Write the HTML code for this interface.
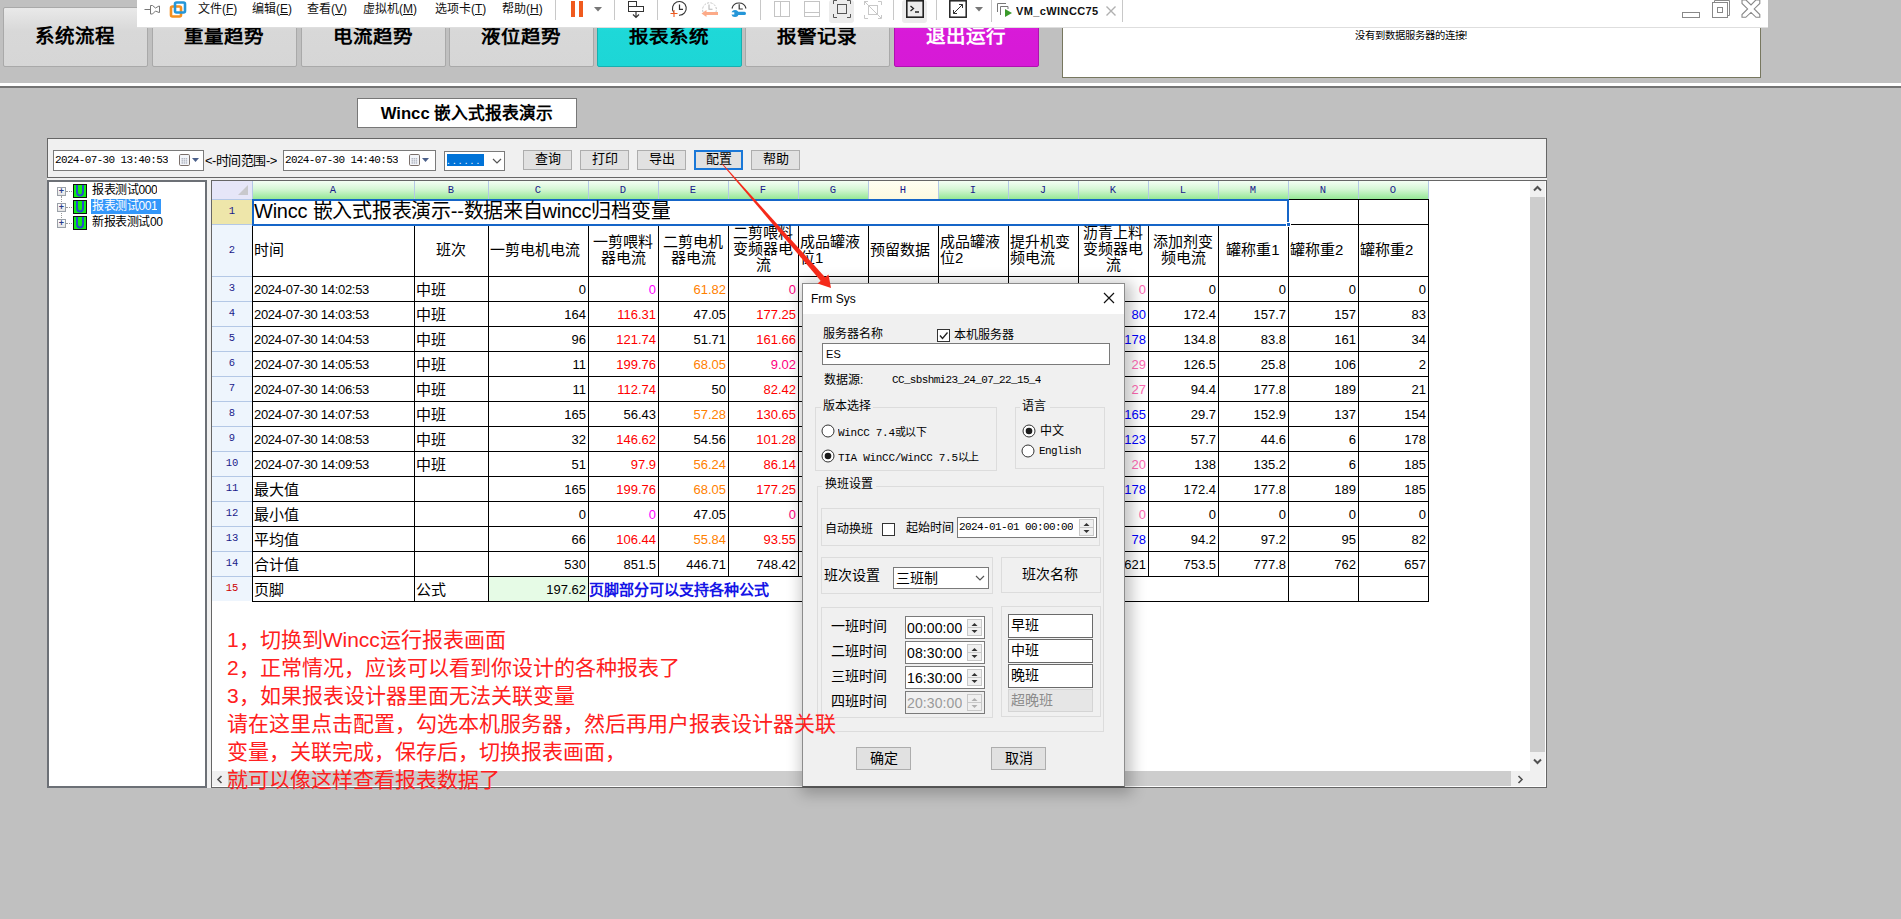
<!DOCTYPE html><html lang="zh-CN"><head><meta charset="utf-8"><style>
*{box-sizing:border-box;margin:0;padding:0}
html,body{width:1901px;height:919px;overflow:hidden;background:#c0c0c0;font-family:"Liberation Sans",sans-serif;color:#000}
.ab{position:absolute}
.navb{position:absolute;top:7px;height:60px;width:145px;padding-right:1px;border:1px solid #a9a9a9;border-radius:2px;background:linear-gradient(#e9e9e9,#d8d8d8 40%,#d6d6d6);font-size:19.5px;font-weight:bold;text-align:center;line-height:56px;letter-spacing:0px}
.c{position:absolute;white-space:nowrap;overflow:hidden}
.dt{font-size:13px}
.mono{font-family:"Liberation Mono",monospace}
.hd{font-size:15px;white-space:normal}
.hl{font-family:"Liberation Mono",monospace;font-weight:normal;font-size:10.5px;color:#1a1a8a}
</style></head><body>

<div class="navb" style="left:3px;">系统流程</div>
<div class="navb" style="left:152px;">重量趋势</div>
<div class="navb" style="left:301px;">电流趋势</div>
<div class="navb" style="left:449px;">液位趋势</div>
<div class="navb" style="left:597px;background:linear-gradient(#33eded,#1ed8d8 40%,#1dd6d6);border-color:#17b0b0;">报表系统</div>
<div class="navb" style="left:745px;">报警记录</div>
<div class="navb" style="left:894px;background:linear-gradient(#e030e0,#d81ad8 40%,#d61ad6);border-color:#b010b0;color:#fff;">退出运行</div>
<div class="ab" style="left:0;top:83px;width:1901px;height:3px;background:#fff"></div>
<div class="ab" style="left:0;top:86px;width:1901px;height:2px;background:#747474"></div>
<div class="ab" style="left:1062px;top:20px;width:699px;height:58px;background:#fff;border:1px solid #77775f"></div>
<div class="ab" style="left:1300px;top:30px;width:222px;text-align:center;font-size:10.3px;line-height:12px">没有到数据服务器的连接!</div>
<div class="ab" style="left:357px;top:98px;width:220px;height:30px;background:#fff;border:1px solid #777;font-size:16.7px;font-weight:bold;text-align:center;line-height:30px">Wincc 嵌入式报表演示</div>
<div class="ab" style="left:47px;top:138px;width:1500px;height:43px;background:#f0f0f0"></div>
<div class="ab" style="left:47px;top:138px;width:1500px;height:40px;background:#f0f0f0;border:1px solid #666"></div>
<div class="ab" style="left:47px;top:180px;width:160px;height:608px;background:#fff;border:2px solid #6c7076"></div>
<div class="ab" style="left:207px;top:180px;width:4px;height:608px;background:#f0f0f0"></div>
<div class="ab" style="left:211px;top:180px;width:1336px;height:608px;background:#fff;border:1px solid #666"></div>
<div class="ab" style="left:53px;top:150px;width:151px;height:21px;background:#fff;border:1px solid #7a7a7a"></div>
<div class="c mono" style="left:55px;top:151px;height:19px;line-height:19px;font-size:11px;letter-spacing:-0.65px">2024-07-30 13:40:53</div>
<svg class="ab" style="left:179px;top:154px" width="22" height="14"><rect x="0.5" y="0.5" width="10" height="11" rx="1.2" fill="#f4f6fa" stroke="#7a6f6a"/><g fill="#b4b8c4"><rect x="2.5" y="4" width="1.5" height="1.5"/><rect x="4.6" y="4" width="1.5" height="1.5"/><rect x="6.7" y="4" width="1.5" height="1.5"/><rect x="2.5" y="6.1" width="1.5" height="1.5"/><rect x="4.6" y="6.1" width="1.5" height="1.5"/><rect x="6.7" y="6.1" width="1.5" height="1.5"/><rect x="2.5" y="8.2" width="1.5" height="1.5"/><rect x="4.6" y="8.2" width="1.5" height="1.5"/><rect x="6.7" y="8.2" width="1.5" height="1.5"/></g><polygon points="13,4 20,4 16.5,8" fill="#4a5f8a"/></svg>
<div class="c" style="left:205px;top:152px;height:18px;line-height:18px;font-size:13px;letter-spacing:-0.5px">&lt;-时间范围-&gt;</div>
<div class="ab" style="left:283px;top:150px;width:153px;height:21px;background:#fff;border:1px solid #7a7a7a"></div>
<div class="c mono" style="left:285px;top:151px;height:19px;line-height:19px;font-size:11px;letter-spacing:-0.65px">2024-07-30 14:40:53</div>
<svg class="ab" style="left:409px;top:154px" width="22" height="14"><rect x="0.5" y="0.5" width="10" height="11" rx="1.2" fill="#f4f6fa" stroke="#7a6f6a"/><g fill="#b4b8c4"><rect x="2.5" y="4" width="1.5" height="1.5"/><rect x="4.6" y="4" width="1.5" height="1.5"/><rect x="6.7" y="4" width="1.5" height="1.5"/><rect x="2.5" y="6.1" width="1.5" height="1.5"/><rect x="4.6" y="6.1" width="1.5" height="1.5"/><rect x="6.7" y="6.1" width="1.5" height="1.5"/><rect x="2.5" y="8.2" width="1.5" height="1.5"/><rect x="4.6" y="8.2" width="1.5" height="1.5"/><rect x="6.7" y="8.2" width="1.5" height="1.5"/></g><polygon points="13,4 20,4 16.5,8" fill="#4a5f8a"/></svg>
<div class="ab" style="left:444px;top:151px;width:61px;height:20px;background:#fff;border:1px solid #7a7a7a"></div>
<div class="ab" style="left:447px;top:154px;width:37px;height:12px;background:#0073d8;color:#fff;font-size:10px;line-height:13px;letter-spacing:3.1px;padding-left:0px">......</div>
<svg class="ab" style="left:492px;top:158px" width="10" height="7"><polyline points="1,1 5,5 9,1" fill="none" stroke="#555" stroke-width="1.2"/></svg>
<div class="ab" style="left:523px;top:150px;width:49px;height:20px;background:#e1e1e1;border:1px solid #adadad;font-size:13px;line-height:16px;text-align:center">查询</div>
<div class="ab" style="left:580px;top:150px;width:49px;height:20px;background:#e1e1e1;border:1px solid #adadad;font-size:13px;line-height:16px;text-align:center">打印</div>
<div class="ab" style="left:637px;top:150px;width:49px;height:20px;background:#e1e1e1;border:1px solid #adadad;font-size:13px;line-height:16px;text-align:center">导出</div>
<div class="ab" style="left:694px;top:150px;width:49px;height:20px;background:#e1e1e1;border:2px solid #1a78d8;font-size:13px;line-height:14px;text-align:center">配置</div>
<div class="ab" style="left:751px;top:150px;width:49px;height:20px;background:#e1e1e1;border:1px solid #adadad;font-size:13px;line-height:16px;text-align:center">帮助</div>
<div class="ab" style="left:61px;top:196px;width:1px;height:24px;border-left:1px dotted #999"></div>
<div class="ab" style="left:57px;top:187px;width:9px;height:9px;border:1px solid #9aa0a8;background:linear-gradient(#fff,#e4e4e4);font-size:9px;line-height:7px;text-align:center;color:#2a3c8c;font-weight:bold">+</div>
<div class="ab" style="left:66px;top:191px;width:6px;height:1px;border-top:1px dotted #999"></div>
<div class="ab" style="left:73px;top:184px;width:14px;height:14px;background:#11ee11;border:1px solid #111"></div>
<svg class="ab" style="left:75px;top:185px" width="10" height="12"><path d="M2,0 V7 Q2,10.5 5,10.5 Q8,10.5 8,7 V0" fill="none" stroke="#2a4ad0" stroke-width="2"/></svg>
<div class="c" style="left:92px;top:182px;height:16px;line-height:16px;font-size:12px;letter-spacing:-0.4px;color:#000">报表测试000</div>
<div class="ab" style="left:57px;top:203px;width:9px;height:9px;border:1px solid #9aa0a8;background:linear-gradient(#fff,#e4e4e4);font-size:9px;line-height:7px;text-align:center;color:#2a3c8c;font-weight:bold">+</div>
<div class="ab" style="left:66px;top:207px;width:6px;height:1px;border-top:1px dotted #999"></div>
<div class="ab" style="left:73px;top:200px;width:14px;height:14px;background:#11ee11;border:1px solid #111"></div>
<svg class="ab" style="left:75px;top:201px" width="10" height="12"><path d="M2,0 V7 Q2,10.5 5,10.5 Q8,10.5 8,7 V0" fill="none" stroke="#2a4ad0" stroke-width="2"/></svg>
<div class="ab" style="left:91px;top:199px;width:70px;height:15px;background:#3397fa"></div>
<div class="c" style="left:92px;top:198px;height:16px;line-height:16px;font-size:12px;letter-spacing:-0.4px;color:#fff">报表测试001</div>
<div class="ab" style="left:57px;top:219px;width:9px;height:9px;border:1px solid #9aa0a8;background:linear-gradient(#fff,#e4e4e4);font-size:9px;line-height:7px;text-align:center;color:#2a3c8c;font-weight:bold">+</div>
<div class="ab" style="left:66px;top:223px;width:6px;height:1px;border-top:1px dotted #999"></div>
<div class="ab" style="left:73px;top:216px;width:14px;height:14px;background:#11ee11;border:1px solid #111"></div>
<svg class="ab" style="left:75px;top:217px" width="10" height="12"><path d="M2,0 V7 Q2,10.5 5,10.5 Q8,10.5 8,7 V0" fill="none" stroke="#2a4ad0" stroke-width="2"/></svg>
<div class="c" style="left:92px;top:214px;height:16px;line-height:16px;font-size:12px;letter-spacing:-0.4px;color:#000">新报表测试00</div>
<div class="ab" style="left:252px;top:181px;width:162px;height:18px;background:linear-gradient(#f4fff4,#d6f7d6 45%,#95e895);border-left:1px solid #b4c8e6"></div>
<div class="ab hl" style="left:252px;top:181px;width:162px;height:18px;line-height:18px;text-align:center">A</div>
<div class="ab" style="left:414px;top:181px;width:74px;height:18px;background:linear-gradient(#f4fff4,#d6f7d6 45%,#95e895);border-left:1px solid #b4c8e6"></div>
<div class="ab hl" style="left:414px;top:181px;width:74px;height:18px;line-height:18px;text-align:center">B</div>
<div class="ab" style="left:488px;top:181px;width:100px;height:18px;background:linear-gradient(#f4fff4,#d6f7d6 45%,#95e895);border-left:1px solid #b4c8e6"></div>
<div class="ab hl" style="left:488px;top:181px;width:100px;height:18px;line-height:18px;text-align:center">C</div>
<div class="ab" style="left:588px;top:181px;width:70px;height:18px;background:linear-gradient(#f4fff4,#d6f7d6 45%,#95e895);border-left:1px solid #b4c8e6"></div>
<div class="ab hl" style="left:588px;top:181px;width:70px;height:18px;line-height:18px;text-align:center">D</div>
<div class="ab" style="left:658px;top:181px;width:70px;height:18px;background:linear-gradient(#f4fff4,#d6f7d6 45%,#95e895);border-left:1px solid #b4c8e6"></div>
<div class="ab hl" style="left:658px;top:181px;width:70px;height:18px;line-height:18px;text-align:center">E</div>
<div class="ab" style="left:728px;top:181px;width:70px;height:18px;background:linear-gradient(#f4fff4,#d6f7d6 45%,#95e895);border-left:1px solid #b4c8e6"></div>
<div class="ab hl" style="left:728px;top:181px;width:70px;height:18px;line-height:18px;text-align:center">F</div>
<div class="ab" style="left:798px;top:181px;width:70px;height:18px;background:linear-gradient(#f4fff4,#d6f7d6 45%,#95e895);border-left:1px solid #b4c8e6"></div>
<div class="ab hl" style="left:798px;top:181px;width:70px;height:18px;line-height:18px;text-align:center">G</div>
<div class="ab" style="left:868px;top:181px;width:70px;height:18px;background:linear-gradient(#fffff2,#fcf9e0);border-left:1px solid #b4c8e6"></div>
<div class="ab hl" style="left:868px;top:181px;width:70px;height:18px;line-height:18px;text-align:center">H</div>
<div class="ab" style="left:938px;top:181px;width:70px;height:18px;background:linear-gradient(#f4fff4,#d6f7d6 45%,#95e895);border-left:1px solid #b4c8e6"></div>
<div class="ab hl" style="left:938px;top:181px;width:70px;height:18px;line-height:18px;text-align:center">I</div>
<div class="ab" style="left:1008px;top:181px;width:70px;height:18px;background:linear-gradient(#f4fff4,#d6f7d6 45%,#95e895);border-left:1px solid #b4c8e6"></div>
<div class="ab hl" style="left:1008px;top:181px;width:70px;height:18px;line-height:18px;text-align:center">J</div>
<div class="ab" style="left:1078px;top:181px;width:70px;height:18px;background:linear-gradient(#f4fff4,#d6f7d6 45%,#95e895);border-left:1px solid #b4c8e6"></div>
<div class="ab hl" style="left:1078px;top:181px;width:70px;height:18px;line-height:18px;text-align:center">K</div>
<div class="ab" style="left:1148px;top:181px;width:70px;height:18px;background:linear-gradient(#f4fff4,#d6f7d6 45%,#95e895);border-left:1px solid #b4c8e6"></div>
<div class="ab hl" style="left:1148px;top:181px;width:70px;height:18px;line-height:18px;text-align:center">L</div>
<div class="ab" style="left:1218px;top:181px;width:70px;height:18px;background:linear-gradient(#f4fff4,#d6f7d6 45%,#95e895);border-left:1px solid #b4c8e6"></div>
<div class="ab hl" style="left:1218px;top:181px;width:70px;height:18px;line-height:18px;text-align:center">M</div>
<div class="ab" style="left:1288px;top:181px;width:70px;height:18px;background:linear-gradient(#f4fff4,#d6f7d6 45%,#95e895);border-left:1px solid #b4c8e6"></div>
<div class="ab hl" style="left:1288px;top:181px;width:70px;height:18px;line-height:18px;text-align:center">N</div>
<div class="ab" style="left:1358px;top:181px;width:70px;height:18px;background:linear-gradient(#f4fff4,#d6f7d6 45%,#95e895);border-left:1px solid #b4c8e6"></div>
<div class="ab hl" style="left:1358px;top:181px;width:70px;height:18px;line-height:18px;text-align:center">O</div>
<div class="ab" style="left:212px;top:181px;width:40px;height:18px;background:#e6e6f8"></div>
<div class="ab" style="left:1428px;top:181px;width:1px;height:18px;background:#b4c8e6"></div>
<svg class="ab" style="left:238px;top:185px" width="11" height="11"><polygon points="10,0 10,10 0,10" fill="#c8c8cc"/></svg>
<div class="ab" style="left:212px;top:199px;width:40px;height:25px;background:#eee6aa;border-top:1px solid #b4c8e6"></div>
<div class="ab hl" style="left:212px;top:199px;width:40px;height:25px;line-height:25px;text-align:center;color:#1a1a8a;font-weight:normal">1</div>
<div class="ab" style="left:212px;top:224px;width:40px;height:52px;background:#eef5fd;border-top:1px solid #b4c8e6"></div>
<div class="ab hl" style="left:212px;top:224px;width:40px;height:52px;line-height:52px;text-align:center;color:#1a1a8a;font-weight:normal">2</div>
<div class="ab" style="left:212px;top:276px;width:40px;height:25px;background:#eef5fd;border-top:1px solid #b4c8e6"></div>
<div class="ab hl" style="left:212px;top:276px;width:40px;height:25px;line-height:25px;text-align:center;color:#1a1a8a;font-weight:normal">3</div>
<div class="ab" style="left:212px;top:301px;width:40px;height:25px;background:#eef5fd;border-top:1px solid #b4c8e6"></div>
<div class="ab hl" style="left:212px;top:301px;width:40px;height:25px;line-height:25px;text-align:center;color:#1a1a8a;font-weight:normal">4</div>
<div class="ab" style="left:212px;top:326px;width:40px;height:25px;background:#eef5fd;border-top:1px solid #b4c8e6"></div>
<div class="ab hl" style="left:212px;top:326px;width:40px;height:25px;line-height:25px;text-align:center;color:#1a1a8a;font-weight:normal">5</div>
<div class="ab" style="left:212px;top:351px;width:40px;height:25px;background:#eef5fd;border-top:1px solid #b4c8e6"></div>
<div class="ab hl" style="left:212px;top:351px;width:40px;height:25px;line-height:25px;text-align:center;color:#1a1a8a;font-weight:normal">6</div>
<div class="ab" style="left:212px;top:376px;width:40px;height:25px;background:#eef5fd;border-top:1px solid #b4c8e6"></div>
<div class="ab hl" style="left:212px;top:376px;width:40px;height:25px;line-height:25px;text-align:center;color:#1a1a8a;font-weight:normal">7</div>
<div class="ab" style="left:212px;top:401px;width:40px;height:25px;background:#eef5fd;border-top:1px solid #b4c8e6"></div>
<div class="ab hl" style="left:212px;top:401px;width:40px;height:25px;line-height:25px;text-align:center;color:#1a1a8a;font-weight:normal">8</div>
<div class="ab" style="left:212px;top:426px;width:40px;height:25px;background:#eef5fd;border-top:1px solid #b4c8e6"></div>
<div class="ab hl" style="left:212px;top:426px;width:40px;height:25px;line-height:25px;text-align:center;color:#1a1a8a;font-weight:normal">9</div>
<div class="ab" style="left:212px;top:451px;width:40px;height:25px;background:#eef5fd;border-top:1px solid #b4c8e6"></div>
<div class="ab hl" style="left:212px;top:451px;width:40px;height:25px;line-height:25px;text-align:center;color:#1a1a8a;font-weight:normal">10</div>
<div class="ab" style="left:212px;top:476px;width:40px;height:25px;background:#eef5fd;border-top:1px solid #b4c8e6"></div>
<div class="ab hl" style="left:212px;top:476px;width:40px;height:25px;line-height:25px;text-align:center;color:#1a1a8a;font-weight:normal">11</div>
<div class="ab" style="left:212px;top:501px;width:40px;height:25px;background:#eef5fd;border-top:1px solid #b4c8e6"></div>
<div class="ab hl" style="left:212px;top:501px;width:40px;height:25px;line-height:25px;text-align:center;color:#1a1a8a;font-weight:normal">12</div>
<div class="ab" style="left:212px;top:526px;width:40px;height:25px;background:#eef5fd;border-top:1px solid #b4c8e6"></div>
<div class="ab hl" style="left:212px;top:526px;width:40px;height:25px;line-height:25px;text-align:center;color:#1a1a8a;font-weight:normal">13</div>
<div class="ab" style="left:212px;top:551px;width:40px;height:25px;background:#eef5fd;border-top:1px solid #b4c8e6"></div>
<div class="ab hl" style="left:212px;top:551px;width:40px;height:25px;line-height:25px;text-align:center;color:#1a1a8a;font-weight:normal">14</div>
<div class="ab" style="left:212px;top:576px;width:40px;height:25px;background:#eef5fd;border-top:1px solid #b4c8e6"></div>
<div class="ab hl" style="left:212px;top:576px;width:40px;height:25px;line-height:25px;text-align:center;color:#cc0000;font-weight:normal">15</div>
<div class="ab" style="left:488px;top:576px;width:100px;height:25px;background:#e6fbe6"></div>
<div class="ab" style="left:252px;top:276px;width:1177px;height:1px;background:#000"></div>
<div class="ab" style="left:252px;top:301px;width:1177px;height:1px;background:#000"></div>
<div class="ab" style="left:252px;top:326px;width:1177px;height:1px;background:#000"></div>
<div class="ab" style="left:252px;top:351px;width:1177px;height:1px;background:#000"></div>
<div class="ab" style="left:252px;top:376px;width:1177px;height:1px;background:#000"></div>
<div class="ab" style="left:252px;top:401px;width:1177px;height:1px;background:#000"></div>
<div class="ab" style="left:252px;top:426px;width:1177px;height:1px;background:#000"></div>
<div class="ab" style="left:252px;top:451px;width:1177px;height:1px;background:#000"></div>
<div class="ab" style="left:252px;top:476px;width:1177px;height:1px;background:#000"></div>
<div class="ab" style="left:252px;top:501px;width:1177px;height:1px;background:#000"></div>
<div class="ab" style="left:252px;top:526px;width:1177px;height:1px;background:#000"></div>
<div class="ab" style="left:252px;top:551px;width:1177px;height:1px;background:#000"></div>
<div class="ab" style="left:252px;top:576px;width:1177px;height:1px;background:#000"></div>
<div class="ab" style="left:252px;top:601px;width:1177px;height:1px;background:#000"></div>
<div class="ab" style="left:1288px;top:199px;width:141px;height:1px;background:#000"></div>
<div class="ab" style="left:1288px;top:224px;width:141px;height:1px;background:#000"></div>
<div class="ab" style="left:252px;top:199px;width:1px;height:403px;background:#000"></div>
<div class="ab" style="left:414px;top:224px;width:1px;height:378px;background:#000"></div>
<div class="ab" style="left:488px;top:224px;width:1px;height:378px;background:#000"></div>
<div class="ab" style="left:588px;top:224px;width:1px;height:378px;background:#000"></div>
<div class="ab" style="left:658px;top:224px;width:1px;height:353px;background:#000"></div>
<div class="ab" style="left:728px;top:224px;width:1px;height:353px;background:#000"></div>
<div class="ab" style="left:798px;top:224px;width:1px;height:353px;background:#000"></div>
<div class="ab" style="left:868px;top:224px;width:1px;height:353px;background:#000"></div>
<div class="ab" style="left:938px;top:224px;width:1px;height:353px;background:#000"></div>
<div class="ab" style="left:1008px;top:224px;width:1px;height:353px;background:#000"></div>
<div class="ab" style="left:1078px;top:224px;width:1px;height:353px;background:#000"></div>
<div class="ab" style="left:1148px;top:224px;width:1px;height:353px;background:#000"></div>
<div class="ab" style="left:1218px;top:224px;width:1px;height:353px;background:#000"></div>
<div class="ab" style="left:1288px;top:199px;width:1px;height:26px;background:#000"></div>
<div class="ab" style="left:1288px;top:224px;width:1px;height:378px;background:#000"></div>
<div class="ab" style="left:1358px;top:199px;width:1px;height:26px;background:#000"></div>
<div class="ab" style="left:1358px;top:224px;width:1px;height:378px;background:#000"></div>
<div class="ab" style="left:1428px;top:199px;width:1px;height:26px;background:#000"></div>
<div class="ab" style="left:1428px;top:224px;width:1px;height:378px;background:#000"></div>
<div class="ab" style="left:252px;top:199px;width:1037px;height:27px;border:2px solid #1565c8"></div>
<div class="ab" style="left:1286px;top:222px;width:5px;height:5px;background:#1565c8;border:1px solid #fff"></div>
<div class="c" style="left:254px;top:199px;height:25px;line-height:25px;font-size:20px;letter-spacing:-0.25px">Wincc 嵌入式报表演示--数据来自wincc归档变量</div>
<div class="c hd" style="left:252px;top:242px;width:162px;line-height:16px;text-align:left;padding-left:2px;">时间</div>
<div class="c hd" style="left:414px;top:242px;width:74px;line-height:16px;text-align:center;">班次</div>
<div class="c hd" style="left:488px;top:242px;width:100px;line-height:16px;text-align:left;padding-left:2px;">一剪电机电流</div>
<div class="c hd" style="left:588px;top:234px;width:70px;line-height:16px;text-align:center;">一剪喂料<br>器电流</div>
<div class="c hd" style="left:658px;top:234px;width:70px;line-height:16px;text-align:center;">二剪电机<br>器电流</div>
<div class="c hd" style="left:728px;top:225px;width:70px;line-height:16px;text-align:center;">二剪喂料<br>变频器电<br>流</div>
<div class="c hd" style="left:798px;top:234px;width:70px;line-height:16px;text-align:left;padding-left:2px;">成品罐液<br>位1</div>
<div class="c hd" style="left:868px;top:242px;width:70px;line-height:16px;text-align:left;padding-left:2px;">预留数据</div>
<div class="c hd" style="left:938px;top:234px;width:70px;line-height:16px;text-align:left;padding-left:2px;">成品罐液<br>位2</div>
<div class="c hd" style="left:1008px;top:234px;width:70px;line-height:16px;text-align:left;padding-left:2px;">提升机变<br>频电流</div>
<div class="c hd" style="left:1078px;top:225px;width:70px;line-height:16px;text-align:center;">沥青上料<br>变频器电<br>流</div>
<div class="c hd" style="left:1148px;top:234px;width:70px;line-height:16px;text-align:center;">添加剂变<br>频电流</div>
<div class="c hd" style="left:1218px;top:242px;width:70px;line-height:16px;text-align:center;">罐称重1</div>
<div class="c hd" style="left:1288px;top:242px;width:70px;line-height:16px;text-align:left;padding-left:2px;">罐称重2</div>
<div class="c hd" style="left:1358px;top:242px;width:70px;line-height:16px;text-align:left;padding-left:2px;">罐称重2</div>
<div class="c dt" style="left:252px;top:277px;width:162px;height:25px;line-height:25px;text-align:left;padding-left:2px;color:#000;letter-spacing:-0.3px;">2024-07-30 14:02:53</div>
<div class="c dt" style="left:414px;top:277px;width:74px;height:25px;line-height:25px;text-align:left;padding-left:2px;color:#000;font-size:15px;">中班</div>
<div class="c dt" style="left:488px;top:277px;width:100px;height:25px;line-height:25px;text-align:right;padding-right:2px;color:#000;">0</div>
<div class="c dt" style="left:588px;top:277px;width:70px;height:25px;line-height:25px;text-align:right;padding-right:2px;color:#ff00ff;">0</div>
<div class="c dt" style="left:658px;top:277px;width:70px;height:25px;line-height:25px;text-align:right;padding-right:2px;color:#ff8000;">61.82</div>
<div class="c dt" style="left:728px;top:277px;width:70px;height:25px;line-height:25px;text-align:right;padding-right:2px;color:#ff0080;">0</div>
<div class="c dt" style="left:1078px;top:277px;width:70px;height:25px;line-height:25px;text-align:right;padding-right:2px;color:#ff69b4;">0</div>
<div class="c dt" style="left:1148px;top:277px;width:70px;height:25px;line-height:25px;text-align:right;padding-right:2px;color:#000;">0</div>
<div class="c dt" style="left:1218px;top:277px;width:70px;height:25px;line-height:25px;text-align:right;padding-right:2px;color:#000;">0</div>
<div class="c dt" style="left:1288px;top:277px;width:70px;height:25px;line-height:25px;text-align:right;padding-right:2px;color:#000;">0</div>
<div class="c dt" style="left:1358px;top:277px;width:70px;height:25px;line-height:25px;text-align:right;padding-right:2px;color:#000;">0</div>
<div class="c dt" style="left:252px;top:302px;width:162px;height:25px;line-height:25px;text-align:left;padding-left:2px;color:#000;letter-spacing:-0.3px;">2024-07-30 14:03:53</div>
<div class="c dt" style="left:414px;top:302px;width:74px;height:25px;line-height:25px;text-align:left;padding-left:2px;color:#000;font-size:15px;">中班</div>
<div class="c dt" style="left:488px;top:302px;width:100px;height:25px;line-height:25px;text-align:right;padding-right:2px;color:#000;">164</div>
<div class="c dt" style="left:588px;top:302px;width:70px;height:25px;line-height:25px;text-align:right;padding-right:2px;color:#ff0000;">116.31</div>
<div class="c dt" style="left:658px;top:302px;width:70px;height:25px;line-height:25px;text-align:right;padding-right:2px;color:#000;">47.05</div>
<div class="c dt" style="left:728px;top:302px;width:70px;height:25px;line-height:25px;text-align:right;padding-right:2px;color:#ff0000;">177.25</div>
<div class="c dt" style="left:1078px;top:302px;width:70px;height:25px;line-height:25px;text-align:right;padding-right:2px;color:#0000ff;">80</div>
<div class="c dt" style="left:1148px;top:302px;width:70px;height:25px;line-height:25px;text-align:right;padding-right:2px;color:#000;">172.4</div>
<div class="c dt" style="left:1218px;top:302px;width:70px;height:25px;line-height:25px;text-align:right;padding-right:2px;color:#000;">157.7</div>
<div class="c dt" style="left:1288px;top:302px;width:70px;height:25px;line-height:25px;text-align:right;padding-right:2px;color:#000;">157</div>
<div class="c dt" style="left:1358px;top:302px;width:70px;height:25px;line-height:25px;text-align:right;padding-right:2px;color:#000;">83</div>
<div class="c dt" style="left:252px;top:327px;width:162px;height:25px;line-height:25px;text-align:left;padding-left:2px;color:#000;letter-spacing:-0.3px;">2024-07-30 14:04:53</div>
<div class="c dt" style="left:414px;top:327px;width:74px;height:25px;line-height:25px;text-align:left;padding-left:2px;color:#000;font-size:15px;">中班</div>
<div class="c dt" style="left:488px;top:327px;width:100px;height:25px;line-height:25px;text-align:right;padding-right:2px;color:#000;">96</div>
<div class="c dt" style="left:588px;top:327px;width:70px;height:25px;line-height:25px;text-align:right;padding-right:2px;color:#ff0000;">121.74</div>
<div class="c dt" style="left:658px;top:327px;width:70px;height:25px;line-height:25px;text-align:right;padding-right:2px;color:#000;">51.71</div>
<div class="c dt" style="left:728px;top:327px;width:70px;height:25px;line-height:25px;text-align:right;padding-right:2px;color:#ff0000;">161.66</div>
<div class="c dt" style="left:1078px;top:327px;width:70px;height:25px;line-height:25px;text-align:right;padding-right:2px;color:#0000ff;">178</div>
<div class="c dt" style="left:1148px;top:327px;width:70px;height:25px;line-height:25px;text-align:right;padding-right:2px;color:#000;">134.8</div>
<div class="c dt" style="left:1218px;top:327px;width:70px;height:25px;line-height:25px;text-align:right;padding-right:2px;color:#000;">83.8</div>
<div class="c dt" style="left:1288px;top:327px;width:70px;height:25px;line-height:25px;text-align:right;padding-right:2px;color:#000;">161</div>
<div class="c dt" style="left:1358px;top:327px;width:70px;height:25px;line-height:25px;text-align:right;padding-right:2px;color:#000;">34</div>
<div class="c dt" style="left:252px;top:352px;width:162px;height:25px;line-height:25px;text-align:left;padding-left:2px;color:#000;letter-spacing:-0.3px;">2024-07-30 14:05:53</div>
<div class="c dt" style="left:414px;top:352px;width:74px;height:25px;line-height:25px;text-align:left;padding-left:2px;color:#000;font-size:15px;">中班</div>
<div class="c dt" style="left:488px;top:352px;width:100px;height:25px;line-height:25px;text-align:right;padding-right:2px;color:#000;">11</div>
<div class="c dt" style="left:588px;top:352px;width:70px;height:25px;line-height:25px;text-align:right;padding-right:2px;color:#ff0000;">199.76</div>
<div class="c dt" style="left:658px;top:352px;width:70px;height:25px;line-height:25px;text-align:right;padding-right:2px;color:#ff8000;">68.05</div>
<div class="c dt" style="left:728px;top:352px;width:70px;height:25px;line-height:25px;text-align:right;padding-right:2px;color:#ff0080;">9.02</div>
<div class="c dt" style="left:1078px;top:352px;width:70px;height:25px;line-height:25px;text-align:right;padding-right:2px;color:#ff69b4;">29</div>
<div class="c dt" style="left:1148px;top:352px;width:70px;height:25px;line-height:25px;text-align:right;padding-right:2px;color:#000;">126.5</div>
<div class="c dt" style="left:1218px;top:352px;width:70px;height:25px;line-height:25px;text-align:right;padding-right:2px;color:#000;">25.8</div>
<div class="c dt" style="left:1288px;top:352px;width:70px;height:25px;line-height:25px;text-align:right;padding-right:2px;color:#000;">106</div>
<div class="c dt" style="left:1358px;top:352px;width:70px;height:25px;line-height:25px;text-align:right;padding-right:2px;color:#000;">2</div>
<div class="c dt" style="left:252px;top:377px;width:162px;height:25px;line-height:25px;text-align:left;padding-left:2px;color:#000;letter-spacing:-0.3px;">2024-07-30 14:06:53</div>
<div class="c dt" style="left:414px;top:377px;width:74px;height:25px;line-height:25px;text-align:left;padding-left:2px;color:#000;font-size:15px;">中班</div>
<div class="c dt" style="left:488px;top:377px;width:100px;height:25px;line-height:25px;text-align:right;padding-right:2px;color:#000;">11</div>
<div class="c dt" style="left:588px;top:377px;width:70px;height:25px;line-height:25px;text-align:right;padding-right:2px;color:#ff0000;">112.74</div>
<div class="c dt" style="left:658px;top:377px;width:70px;height:25px;line-height:25px;text-align:right;padding-right:2px;color:#000;">50</div>
<div class="c dt" style="left:728px;top:377px;width:70px;height:25px;line-height:25px;text-align:right;padding-right:2px;color:#ff0000;">82.42</div>
<div class="c dt" style="left:1078px;top:377px;width:70px;height:25px;line-height:25px;text-align:right;padding-right:2px;color:#ff69b4;">27</div>
<div class="c dt" style="left:1148px;top:377px;width:70px;height:25px;line-height:25px;text-align:right;padding-right:2px;color:#000;">94.4</div>
<div class="c dt" style="left:1218px;top:377px;width:70px;height:25px;line-height:25px;text-align:right;padding-right:2px;color:#000;">177.8</div>
<div class="c dt" style="left:1288px;top:377px;width:70px;height:25px;line-height:25px;text-align:right;padding-right:2px;color:#000;">189</div>
<div class="c dt" style="left:1358px;top:377px;width:70px;height:25px;line-height:25px;text-align:right;padding-right:2px;color:#000;">21</div>
<div class="c dt" style="left:252px;top:402px;width:162px;height:25px;line-height:25px;text-align:left;padding-left:2px;color:#000;letter-spacing:-0.3px;">2024-07-30 14:07:53</div>
<div class="c dt" style="left:414px;top:402px;width:74px;height:25px;line-height:25px;text-align:left;padding-left:2px;color:#000;font-size:15px;">中班</div>
<div class="c dt" style="left:488px;top:402px;width:100px;height:25px;line-height:25px;text-align:right;padding-right:2px;color:#000;">165</div>
<div class="c dt" style="left:588px;top:402px;width:70px;height:25px;line-height:25px;text-align:right;padding-right:2px;color:#000;">56.43</div>
<div class="c dt" style="left:658px;top:402px;width:70px;height:25px;line-height:25px;text-align:right;padding-right:2px;color:#ff8000;">57.28</div>
<div class="c dt" style="left:728px;top:402px;width:70px;height:25px;line-height:25px;text-align:right;padding-right:2px;color:#ff0000;">130.65</div>
<div class="c dt" style="left:1078px;top:402px;width:70px;height:25px;line-height:25px;text-align:right;padding-right:2px;color:#0000ff;">165</div>
<div class="c dt" style="left:1148px;top:402px;width:70px;height:25px;line-height:25px;text-align:right;padding-right:2px;color:#000;">29.7</div>
<div class="c dt" style="left:1218px;top:402px;width:70px;height:25px;line-height:25px;text-align:right;padding-right:2px;color:#000;">152.9</div>
<div class="c dt" style="left:1288px;top:402px;width:70px;height:25px;line-height:25px;text-align:right;padding-right:2px;color:#000;">137</div>
<div class="c dt" style="left:1358px;top:402px;width:70px;height:25px;line-height:25px;text-align:right;padding-right:2px;color:#000;">154</div>
<div class="c dt" style="left:252px;top:427px;width:162px;height:25px;line-height:25px;text-align:left;padding-left:2px;color:#000;letter-spacing:-0.3px;">2024-07-30 14:08:53</div>
<div class="c dt" style="left:414px;top:427px;width:74px;height:25px;line-height:25px;text-align:left;padding-left:2px;color:#000;font-size:15px;">中班</div>
<div class="c dt" style="left:488px;top:427px;width:100px;height:25px;line-height:25px;text-align:right;padding-right:2px;color:#000;">32</div>
<div class="c dt" style="left:588px;top:427px;width:70px;height:25px;line-height:25px;text-align:right;padding-right:2px;color:#ff0000;">146.62</div>
<div class="c dt" style="left:658px;top:427px;width:70px;height:25px;line-height:25px;text-align:right;padding-right:2px;color:#000;">54.56</div>
<div class="c dt" style="left:728px;top:427px;width:70px;height:25px;line-height:25px;text-align:right;padding-right:2px;color:#ff0000;">101.28</div>
<div class="c dt" style="left:1078px;top:427px;width:70px;height:25px;line-height:25px;text-align:right;padding-right:2px;color:#0000ff;">123</div>
<div class="c dt" style="left:1148px;top:427px;width:70px;height:25px;line-height:25px;text-align:right;padding-right:2px;color:#000;">57.7</div>
<div class="c dt" style="left:1218px;top:427px;width:70px;height:25px;line-height:25px;text-align:right;padding-right:2px;color:#000;">44.6</div>
<div class="c dt" style="left:1288px;top:427px;width:70px;height:25px;line-height:25px;text-align:right;padding-right:2px;color:#000;">6</div>
<div class="c dt" style="left:1358px;top:427px;width:70px;height:25px;line-height:25px;text-align:right;padding-right:2px;color:#000;">178</div>
<div class="c dt" style="left:252px;top:452px;width:162px;height:25px;line-height:25px;text-align:left;padding-left:2px;color:#000;letter-spacing:-0.3px;">2024-07-30 14:09:53</div>
<div class="c dt" style="left:414px;top:452px;width:74px;height:25px;line-height:25px;text-align:left;padding-left:2px;color:#000;font-size:15px;">中班</div>
<div class="c dt" style="left:488px;top:452px;width:100px;height:25px;line-height:25px;text-align:right;padding-right:2px;color:#000;">51</div>
<div class="c dt" style="left:588px;top:452px;width:70px;height:25px;line-height:25px;text-align:right;padding-right:2px;color:#ff0000;">97.9</div>
<div class="c dt" style="left:658px;top:452px;width:70px;height:25px;line-height:25px;text-align:right;padding-right:2px;color:#ff8000;">56.24</div>
<div class="c dt" style="left:728px;top:452px;width:70px;height:25px;line-height:25px;text-align:right;padding-right:2px;color:#ff0000;">86.14</div>
<div class="c dt" style="left:1078px;top:452px;width:70px;height:25px;line-height:25px;text-align:right;padding-right:2px;color:#ff69b4;">20</div>
<div class="c dt" style="left:1148px;top:452px;width:70px;height:25px;line-height:25px;text-align:right;padding-right:2px;color:#000;">138</div>
<div class="c dt" style="left:1218px;top:452px;width:70px;height:25px;line-height:25px;text-align:right;padding-right:2px;color:#000;">135.2</div>
<div class="c dt" style="left:1288px;top:452px;width:70px;height:25px;line-height:25px;text-align:right;padding-right:2px;color:#000;">6</div>
<div class="c dt" style="left:1358px;top:452px;width:70px;height:25px;line-height:25px;text-align:right;padding-right:2px;color:#000;">185</div>
<div class="c dt" style="left:252px;top:477px;width:162px;height:25px;line-height:25px;text-align:left;padding-left:2px;color:#000;font-size:15px;">最大值</div>
<div class="c dt" style="left:488px;top:477px;width:100px;height:25px;line-height:25px;text-align:right;padding-right:2px;color:#000;">165</div>
<div class="c dt" style="left:588px;top:477px;width:70px;height:25px;line-height:25px;text-align:right;padding-right:2px;color:#ff0000;">199.76</div>
<div class="c dt" style="left:658px;top:477px;width:70px;height:25px;line-height:25px;text-align:right;padding-right:2px;color:#ff8000;">68.05</div>
<div class="c dt" style="left:728px;top:477px;width:70px;height:25px;line-height:25px;text-align:right;padding-right:2px;color:#ff0000;">177.25</div>
<div class="c dt" style="left:1078px;top:477px;width:70px;height:25px;line-height:25px;text-align:right;padding-right:2px;color:#0000ff;">178</div>
<div class="c dt" style="left:1148px;top:477px;width:70px;height:25px;line-height:25px;text-align:right;padding-right:2px;color:#000;">172.4</div>
<div class="c dt" style="left:1218px;top:477px;width:70px;height:25px;line-height:25px;text-align:right;padding-right:2px;color:#000;">177.8</div>
<div class="c dt" style="left:1288px;top:477px;width:70px;height:25px;line-height:25px;text-align:right;padding-right:2px;color:#000;">189</div>
<div class="c dt" style="left:1358px;top:477px;width:70px;height:25px;line-height:25px;text-align:right;padding-right:2px;color:#000;">185</div>
<div class="c dt" style="left:252px;top:502px;width:162px;height:25px;line-height:25px;text-align:left;padding-left:2px;color:#000;font-size:15px;">最小值</div>
<div class="c dt" style="left:488px;top:502px;width:100px;height:25px;line-height:25px;text-align:right;padding-right:2px;color:#000;">0</div>
<div class="c dt" style="left:588px;top:502px;width:70px;height:25px;line-height:25px;text-align:right;padding-right:2px;color:#ff00ff;">0</div>
<div class="c dt" style="left:658px;top:502px;width:70px;height:25px;line-height:25px;text-align:right;padding-right:2px;color:#000;">47.05</div>
<div class="c dt" style="left:728px;top:502px;width:70px;height:25px;line-height:25px;text-align:right;padding-right:2px;color:#ff0080;">0</div>
<div class="c dt" style="left:1078px;top:502px;width:70px;height:25px;line-height:25px;text-align:right;padding-right:2px;color:#ff69b4;">0</div>
<div class="c dt" style="left:1148px;top:502px;width:70px;height:25px;line-height:25px;text-align:right;padding-right:2px;color:#000;">0</div>
<div class="c dt" style="left:1218px;top:502px;width:70px;height:25px;line-height:25px;text-align:right;padding-right:2px;color:#000;">0</div>
<div class="c dt" style="left:1288px;top:502px;width:70px;height:25px;line-height:25px;text-align:right;padding-right:2px;color:#000;">0</div>
<div class="c dt" style="left:1358px;top:502px;width:70px;height:25px;line-height:25px;text-align:right;padding-right:2px;color:#000;">0</div>
<div class="c dt" style="left:252px;top:527px;width:162px;height:25px;line-height:25px;text-align:left;padding-left:2px;color:#000;font-size:15px;">平均值</div>
<div class="c dt" style="left:488px;top:527px;width:100px;height:25px;line-height:25px;text-align:right;padding-right:2px;color:#000;">66</div>
<div class="c dt" style="left:588px;top:527px;width:70px;height:25px;line-height:25px;text-align:right;padding-right:2px;color:#ff0000;">106.44</div>
<div class="c dt" style="left:658px;top:527px;width:70px;height:25px;line-height:25px;text-align:right;padding-right:2px;color:#ff8000;">55.84</div>
<div class="c dt" style="left:728px;top:527px;width:70px;height:25px;line-height:25px;text-align:right;padding-right:2px;color:#ff0000;">93.55</div>
<div class="c dt" style="left:1078px;top:527px;width:70px;height:25px;line-height:25px;text-align:right;padding-right:2px;color:#0000ff;">78</div>
<div class="c dt" style="left:1148px;top:527px;width:70px;height:25px;line-height:25px;text-align:right;padding-right:2px;color:#000;">94.2</div>
<div class="c dt" style="left:1218px;top:527px;width:70px;height:25px;line-height:25px;text-align:right;padding-right:2px;color:#000;">97.2</div>
<div class="c dt" style="left:1288px;top:527px;width:70px;height:25px;line-height:25px;text-align:right;padding-right:2px;color:#000;">95</div>
<div class="c dt" style="left:1358px;top:527px;width:70px;height:25px;line-height:25px;text-align:right;padding-right:2px;color:#000;">82</div>
<div class="c dt" style="left:252px;top:552px;width:162px;height:25px;line-height:25px;text-align:left;padding-left:2px;color:#000;font-size:15px;">合计值</div>
<div class="c dt" style="left:488px;top:552px;width:100px;height:25px;line-height:25px;text-align:right;padding-right:2px;color:#000;">530</div>
<div class="c dt" style="left:588px;top:552px;width:70px;height:25px;line-height:25px;text-align:right;padding-right:2px;color:#000;">851.5</div>
<div class="c dt" style="left:658px;top:552px;width:70px;height:25px;line-height:25px;text-align:right;padding-right:2px;color:#000;">446.71</div>
<div class="c dt" style="left:728px;top:552px;width:70px;height:25px;line-height:25px;text-align:right;padding-right:2px;color:#000;">748.42</div>
<div class="c dt" style="left:1078px;top:552px;width:70px;height:25px;line-height:25px;text-align:right;padding-right:2px;color:#000;">621</div>
<div class="c dt" style="left:1148px;top:552px;width:70px;height:25px;line-height:25px;text-align:right;padding-right:2px;color:#000;">753.5</div>
<div class="c dt" style="left:1218px;top:552px;width:70px;height:25px;line-height:25px;text-align:right;padding-right:2px;color:#000;">777.8</div>
<div class="c dt" style="left:1288px;top:552px;width:70px;height:25px;line-height:25px;text-align:right;padding-right:2px;color:#000;">762</div>
<div class="c dt" style="left:1358px;top:552px;width:70px;height:25px;line-height:25px;text-align:right;padding-right:2px;color:#000;">657</div>
<div class="c dt" style="left:252px;top:577px;width:162px;height:25px;line-height:25px;text-align:left;padding-left:2px;color:#000;font-size:15px;">页脚</div>
<div class="c dt" style="left:414px;top:577px;width:74px;height:25px;line-height:25px;text-align:left;padding-left:2px;color:#000;font-size:15px;">公式</div>
<div class="c dt" style="left:488px;top:577px;width:100px;height:25px;line-height:25px;text-align:right;padding-right:2px;color:#000;">197.62</div>
<div class="c" style="left:589px;top:577px;height:25px;line-height:25px;font-size:15px;font-weight:bold;color:#1414e6">页脚部分可以支持各种公式</div>
<div class="ab" style="left:1530px;top:181px;width:15px;height:590px;background:#cdcdcd"></div>
<div class="ab" style="left:1530px;top:181px;width:15px;height:16px;background:#f0f0f0"></div>
<div class="ab" style="left:1530px;top:752px;width:15px;height:19px;background:#f0f0f0"></div>
<svg class="ab" style="left:1533px;top:185px" width="9" height="7"><polyline points="1,5.5 4.5,2 8,5.5" fill="none" stroke="#505050" stroke-width="2"/></svg>
<svg class="ab" style="left:1533px;top:758px" width="9" height="7"><polyline points="1,1.5 4.5,5 8,1.5" fill="none" stroke="#505050" stroke-width="2"/></svg>
<div class="ab" style="left:212px;top:771px;width:1318px;height:15px;background:#cdcdcd"></div>
<div class="ab" style="left:212px;top:771px;width:16px;height:15px;background:#f0f0f0"></div>
<div class="ab" style="left:1511px;top:771px;width:34px;height:15px;background:#f0f0f0"></div>
<svg class="ab" style="left:216px;top:775px" width="7" height="9"><polyline points="5.5,1 2,4.5 5.5,8" fill="none" stroke="#505050" stroke-width="1.6"/></svg>
<svg class="ab" style="left:1517px;top:775px" width="7" height="9"><polyline points="1.5,1 5,4.5 1.5,8" fill="none" stroke="#505050" stroke-width="1.6"/></svg>
<div class="ab" style="left:802px;top:283px;width:323px;height:504px;box-shadow:3px 3px 14px 4px rgba(0,0,0,0.24)"></div>
<div class="ab" style="left:802px;top:283px;width:323px;height:504px;background:#f0f0f0;border:1px solid #8c8c8c;border-bottom-color:#555"></div>
<div class="ab" style="left:803px;top:284px;width:321px;height:30px;background:#fff"></div>
<div class="c" style="left:811px;top:290px;height:18px;line-height:18px;font-size:12px;color:#000">Frm Sys</div>
<svg class="ab" style="left:1103px;top:292px" width="12" height="12"><path d="M1,1 L11,11 M11,1 L1,11" stroke="#111" stroke-width="1.2"/></svg>
<div class="c" style="left:823px;top:326px;height:16px;line-height:16px;font-size:12px;color:#000;">服务器名称</div>
<div class="ab" style="left:937px;top:329px;width:13px;height:13px;background:#fff;border:1px solid #333"></div>
<svg class="ab" style="left:938px;top:330px" width="11" height="11"><polyline points="2,5.5 4.5,8.5 9.5,2.5" fill="none" stroke="#222" stroke-width="1.3"/></svg>
<div class="c" style="left:954px;top:327px;height:16px;line-height:16px;font-size:12px;color:#000;">本机服务器</div>
<div class="ab" style="left:822px;top:343px;width:288px;height:22px;background:#fff;border:1px solid #7a7a7a"></div>
<div class="c" style="left:826px;top:346px;height:16px;line-height:16px;font-size:11px;color:#000;letter-spacing:0.2px">ES</div>
<div class="c" style="left:824px;top:372px;height:16px;line-height:16px;font-size:12px;color:#000;">数据源:</div>
<div class="c" style="left:892px;top:372px;height:16px;line-height:16px;font-size:11px;color:#000;font-family:'Liberation Mono',monospace;letter-spacing:-0.65px">CC_sbshmi23_24_07_22_15_4</div>
<div class="ab" style="left:815px;top:407px;width:182px;height:64px;border:1px solid #dcdcdc"></div>
<div class="ab" style="left:821px;top:400px;width:52px;height:14px;background:#f0f0f0"></div>
<div class="c" style="left:823px;top:398px;height:16px;line-height:16px;font-size:12px;color:#000;">版本选择</div>
<svg class="ab" style="left:821px;top:424px" width="14" height="14"><circle cx="7" cy="7" r="6" fill="#fff" stroke="#333" stroke-width="1"/></svg>
<div class="c" style="left:838px;top:425px;height:16px;line-height:16px;font-size:11px;color:#000;font-family:'Liberation Mono',monospace;letter-spacing:-0.3px">WinCC 7.4或以下</div>
<svg class="ab" style="left:821px;top:449px" width="14" height="14"><circle cx="7" cy="7" r="6" fill="#fff" stroke="#333" stroke-width="1"/><circle cx="7" cy="7" r="3.3" fill="#1a1a1a"/></svg>
<div class="c" style="left:838px;top:450px;height:16px;line-height:16px;font-size:11px;color:#000;font-family:'Liberation Mono',monospace;letter-spacing:-0.3px">TIA WinCC/WinCC 7.5以上</div>
<div class="ab" style="left:1015px;top:407px;width:90px;height:62px;border:1px solid #dcdcdc"></div>
<div class="ab" style="left:1020px;top:400px;width:30px;height:14px;background:#f0f0f0"></div>
<div class="c" style="left:1022px;top:398px;height:16px;line-height:16px;font-size:12px;color:#000;">语言</div>
<svg class="ab" style="left:1022px;top:424px" width="14" height="14"><circle cx="7" cy="7" r="6" fill="#fff" stroke="#333" stroke-width="1"/><circle cx="7" cy="7" r="3.3" fill="#1a1a1a"/></svg>
<div class="c" style="left:1040px;top:423px;height:16px;line-height:16px;font-size:12px;color:#000;">中文</div>
<svg class="ab" style="left:1021px;top:444px" width="14" height="14"><circle cx="7" cy="7" r="6" fill="#fff" stroke="#333" stroke-width="1"/></svg>
<div class="c" style="left:1039px;top:443px;height:16px;line-height:16px;font-size:11px;color:#000;font-family:'Liberation Mono',monospace;letter-spacing:-0.6px">English</div>
<div class="ab" style="left:817px;top:486px;width:287px;height:246px;border:1px solid #dcdcdc"></div>
<div class="ab" style="left:822px;top:478px;width:54px;height:14px;background:#f0f0f0"></div>
<div class="c" style="left:825px;top:476px;height:16px;line-height:16px;font-size:12px;color:#000;">换班设置</div>
<div class="ab" style="left:821px;top:508px;width:279px;height:38px;border:1px solid #dcdcdc"></div>
<div class="c" style="left:825px;top:521px;height:16px;line-height:16px;font-size:12px;color:#000;">自动换班</div>
<div class="ab" style="left:882px;top:523px;width:13px;height:13px;background:#fff;border:1px solid #333"></div>
<div class="c" style="left:906px;top:520px;height:16px;line-height:16px;font-size:12px;color:#000;">起始时间</div>
<div class="ab" style="left:957px;top:517px;width:140px;height:21px;background:#fff;border:1px solid #7a7a7a"></div>
<div class="c" style="left:959px;top:519px;height:16px;line-height:16px;font-size:11px;color:#000;font-family:'Liberation Mono',monospace;letter-spacing:-0.6px">2024-01-01 00:00:00</div>
<div class="ab" style="left:1079px;top:519px;width:15px;height:17px;background:#f0f0f0;border:1px solid #c8c8c8"></div>
<div class="ab" style="left:1079px;top:527px;width:15px;height:1px;background:#c8c8c8"></div>
<svg class="ab" style="left:1083px;top:521px" width="7" height="13"><polygon points="0.5,5 6.5,5 3.5,2" fill="#333"/><polygon points="0.5,9 6.5,9 3.5,12" fill="#333"/></svg>
<div class="ab" style="left:821px;top:557px;width:172px;height:37px;border:1px solid #dcdcdc"></div>
<div class="c" style="left:824px;top:567px;height:16px;line-height:16px;font-size:14px;color:#000;">班次设置</div>
<div class="ab" style="left:893px;top:567px;width:96px;height:22px;background:#fff;border:1px solid #7a7a7a"></div>
<div class="c" style="left:896px;top:570px;height:16px;line-height:16px;font-size:14px;color:#000;">三班制</div>
<svg class="ab" style="left:975px;top:575px" width="10" height="7"><polyline points="1,1 5,5 9,1" fill="none" stroke="#555" stroke-width="1.2"/></svg>
<div class="ab" style="left:1001px;top:557px;width:100px;height:36px;border:1px solid #dcdcdc"></div>
<div class="c" style="left:1022px;top:566px;height:16px;line-height:16px;font-size:14px;color:#000;">班次名称</div>
<div class="ab" style="left:821px;top:607px;width:172px;height:111px;border:1px solid #dcdcdc"></div>
<div class="ab" style="left:1001px;top:606px;width:100px;height:111px;border:1px solid #dcdcdc"></div>
<div class="c" style="left:831px;top:618px;height:16px;line-height:16px;font-size:14px;color:#000;">一班时间</div>
<div class="ab" style="left:905px;top:616px;width:80px;height:23px;background:#fff;border:1px solid #7a7a7a"></div>
<div class="c" style="left:907px;top:620px;height:16px;line-height:16px;font-size:14px;color:#000;letter-spacing:0.1px">00:00:00</div>
<div class="ab" style="left:967px;top:619px;width:15px;height:17px;background:#f0f0f0;border:1px solid #c8c8c8"></div>
<div class="ab" style="left:967px;top:627px;width:15px;height:1px;background:#c8c8c8"></div>
<svg class="ab" style="left:971px;top:621px" width="7" height="13"><polygon points="0.5,5 6.5,5 3.5,2" fill="#333"/><polygon points="0.5,9 6.5,9 3.5,12" fill="#333"/></svg>
<div class="c" style="left:831px;top:643px;height:16px;line-height:16px;font-size:14px;color:#000;">二班时间</div>
<div class="ab" style="left:905px;top:641px;width:80px;height:23px;background:#fff;border:1px solid #7a7a7a"></div>
<div class="c" style="left:907px;top:645px;height:16px;line-height:16px;font-size:14px;color:#000;letter-spacing:0.1px">08:30:00</div>
<div class="ab" style="left:967px;top:644px;width:15px;height:17px;background:#f0f0f0;border:1px solid #c8c8c8"></div>
<div class="ab" style="left:967px;top:652px;width:15px;height:1px;background:#c8c8c8"></div>
<svg class="ab" style="left:971px;top:646px" width="7" height="13"><polygon points="0.5,5 6.5,5 3.5,2" fill="#333"/><polygon points="0.5,9 6.5,9 3.5,12" fill="#333"/></svg>
<div class="c" style="left:831px;top:668px;height:16px;line-height:16px;font-size:14px;color:#000;">三班时间</div>
<div class="ab" style="left:905px;top:666px;width:80px;height:23px;background:#fff;border:1px solid #7a7a7a"></div>
<div class="c" style="left:907px;top:670px;height:16px;line-height:16px;font-size:14px;color:#000;letter-spacing:0.1px">16:30:00</div>
<div class="ab" style="left:967px;top:669px;width:15px;height:17px;background:#f0f0f0;border:1px solid #c8c8c8"></div>
<div class="ab" style="left:967px;top:677px;width:15px;height:1px;background:#c8c8c8"></div>
<svg class="ab" style="left:971px;top:671px" width="7" height="13"><polygon points="0.5,5 6.5,5 3.5,2" fill="#333"/><polygon points="0.5,9 6.5,9 3.5,12" fill="#333"/></svg>
<div class="c" style="left:831px;top:693px;height:16px;line-height:16px;font-size:14px;color:#000;">四班时间</div>
<div class="ab" style="left:905px;top:691px;width:80px;height:23px;background:#f0f0f0;border:1px solid #7a7a7a"></div>
<div class="c" style="left:907px;top:695px;height:16px;line-height:16px;font-size:14px;color:#9a9a9a;letter-spacing:0.1px">20:30:00</div>
<div class="ab" style="left:967px;top:694px;width:15px;height:17px;background:#f0f0f0;border:1px solid #c8c8c8"></div>
<div class="ab" style="left:967px;top:702px;width:15px;height:1px;background:#c8c8c8"></div>
<svg class="ab" style="left:971px;top:696px" width="7" height="13"><polygon points="0.5,5 6.5,5 3.5,2" fill="#b0b0b0"/><polygon points="0.5,9 6.5,9 3.5,12" fill="#b0b0b0"/></svg>
<div class="ab" style="left:1008px;top:614px;width:85px;height:24px;background:#fff;border:1px solid #6a6a6a"></div>
<div class="c" style="left:1011px;top:617px;height:16px;line-height:16px;font-size:14px;color:#000;">早班</div>
<div class="ab" style="left:1008px;top:639px;width:85px;height:24px;background:#fff;border:1px solid #6a6a6a"></div>
<div class="c" style="left:1011px;top:642px;height:16px;line-height:16px;font-size:14px;color:#000;">中班</div>
<div class="ab" style="left:1008px;top:664px;width:85px;height:24px;background:#fff;border:1px solid #6a6a6a"></div>
<div class="c" style="left:1011px;top:667px;height:16px;line-height:16px;font-size:14px;color:#000;">晚班</div>
<div class="ab" style="left:1008px;top:689px;width:85px;height:23px;background:#e6e6e6;border:1px solid #d4d4d4"></div>
<div class="c" style="left:1011px;top:692px;height:16px;line-height:16px;font-size:14px;color:#8c8c8c;">超晚班</div>
<div class="ab" style="left:856px;top:747px;width:55px;height:23px;background:#e1e1e1;border:1px solid #adadad;font-size:14px;line-height:21px;text-align:center">确定</div>
<div class="ab" style="left:991px;top:747px;width:55px;height:23px;background:#e1e1e1;border:1px solid #adadad;font-size:14px;line-height:21px;text-align:center">取消</div>
<div class="c" style="left:227px;top:626px;height:28px;line-height:28px;font-size:21px;color:#ff2020;overflow:visible">1，切换到Wincc运行报表画面</div>
<div class="c" style="left:227px;top:654px;height:28px;line-height:28px;font-size:21px;color:#ff2020;overflow:visible">2，正常情况，应该可以看到你设计的各种报表了</div>
<div class="c" style="left:227px;top:682px;height:28px;line-height:28px;font-size:21px;color:#ff2020;overflow:visible">3，如果报表设计器里面无法关联变量</div>
<div class="c" style="left:227px;top:710px;height:28px;line-height:28px;font-size:21px;color:#ff2020;overflow:visible">请在这里点击配置，勾选本机服务器，然后再用户报表设计器关联</div>
<div class="c" style="left:227px;top:738px;height:28px;line-height:28px;font-size:21px;color:#ff2020;overflow:visible">变量，关联完成，保存后，切换报表画面，</div>
<div class="c" style="left:227px;top:766px;height:28px;line-height:28px;font-size:21px;color:#ff2020;overflow:visible">就可以像这样查看报表数据了</div>
<svg class="ab" style="left:0;top:0" width="1901" height="919"><polygon points="722.2,164.4 722.9,163.9 825.5,277.8 821,281.3" fill="#f52a1a"/><polygon points="831,288 817.5,283.5 828.5,274.5" fill="#f52a1a"/></svg>
<div class="ab" style="left:137px;top:0;width:1631px;height:28px;background:#fff;border-bottom:1px solid #dedede"></div>
<svg class="ab" style="left:144px;top:0px" width="18" height="16"><path d="M0.5,9.5 H7 M6.5,5.5 H8.5 L11.5,8 L15,6 H15.5 V12.5 H15 L11.5,11 L8.5,14 H6.5 Z" fill="none" stroke="#777" stroke-width="1"/></svg>
<svg class="ab" style="left:169px;top:1px" width="20" height="18"><rect x="2" y="5.5" width="10" height="10" rx="1.5" fill="none" stroke="#f5901e" stroke-width="2.6"/><rect x="6" y="1.5" width="10" height="10" rx="1.5" fill="none" stroke="#2596d8" stroke-width="2.6"/></svg>
<div class="c" style="left:198px;top:1px;height:16px;line-height:16px;font-size:12px;color:#111">文件(<u>F</u>)</div>
<div class="c" style="left:252px;top:1px;height:16px;line-height:16px;font-size:12px;color:#111">编辑(<u>E</u>)</div>
<div class="c" style="left:307px;top:1px;height:16px;line-height:16px;font-size:12px;color:#111">查看(<u>V</u>)</div>
<div class="c" style="left:363px;top:1px;height:16px;line-height:16px;font-size:12px;color:#111">虚拟机(<u>M</u>)</div>
<div class="c" style="left:435px;top:1px;height:16px;line-height:16px;font-size:12px;color:#111">选项卡(<u>T</u>)</div>
<div class="c" style="left:502px;top:1px;height:16px;line-height:16px;font-size:12px;color:#111">帮助(<u>H</u>)</div>
<div class="ab" style="left:555px;top:0;width:1px;height:20px;background:#c8c8c8"></div>
<div class="ab" style="left:614px;top:0;width:1px;height:20px;background:#c8c8c8"></div>
<div class="ab" style="left:657px;top:0;width:1px;height:20px;background:#c8c8c8"></div>
<div class="ab" style="left:760px;top:0;width:1px;height:20px;background:#c8c8c8"></div>
<div class="ab" style="left:893px;top:0;width:1px;height:20px;background:#c8c8c8"></div>
<div class="ab" style="left:936px;top:0;width:1px;height:20px;background:#c8c8c8"></div>
<div class="ab" style="left:991px;top:0;width:1px;height:22px;background:#c8c8c8"></div>
<div class="ab" style="left:1122px;top:0;width:1px;height:22px;background:#c8c8c8"></div>
<div class="ab" style="left:571px;top:1px;width:4px;height:16px;background:#f05a1e"></div>
<div class="ab" style="left:579px;top:1px;width:4px;height:16px;background:#f05a1e"></div>
<svg class="ab" style="left:594px;top:7px" width="8" height="5"><polygon points="0,0 8,0 4,4.5" fill="#777"/></svg>
<svg class="ab" style="left:975px;top:7px" width="8" height="5"><polygon points="0,0 8,0 4,4.5" fill="#777"/></svg>
<svg class="ab" style="left:627px;top:0px" width="18" height="19"><rect x="1.5" y="1.5" width="8" height="5" fill="none" stroke="#333"/><rect x="1.5" y="6.5" width="15" height="5" fill="none" stroke="#333"/><path d="M9,11.5 V17 M6,14.5 L9,17.5 L12,14.5" fill="none" stroke="#333" stroke-width="1.2"/></svg>
<svg class="ab" style="left:670px;top:0px" width="18" height="18"><path d="M3.8,12.5 A6.9,6.9 0 1 1 9,15.3" fill="none" stroke="#333" stroke-width="1.1" /><path d="M9.5,4.5 V9.3 H13" fill="none" stroke="#333" stroke-width="1.2"/><path d="M0.5,13.5 H7.5 M4,10 V17" stroke="#f05a1e" stroke-width="1.1"/></svg>
<svg class="ab" style="left:701px;top:0px" width="18" height="18"><path d="M2,12 A6.9,6.9 0 1 1 15,12" fill="none" stroke="#c4c4c4" stroke-width="1" stroke-dasharray="2.2,1.3"/><path d="M8,4.5 V9.3 H11.5" fill="none" stroke="#b8b8b8" stroke-width="1.1"/><rect x="5" y="12" width="12" height="3" fill="#fcaa88"/><polygon points="0.5,13.5 5.5,10 5.5,17" fill="#fcaa88"/></svg>
<svg class="ab" style="left:731px;top:0px" width="18" height="18"><path d="M1,8.5 A7.2,7.2 0 0 1 15,8.5" fill="none" stroke="#333" stroke-width="1.1"/><path d="M8.2,4.3 V9 H11.8" fill="none" stroke="#333" stroke-width="1.2"/><circle cx="4" cy="13.4" r="3.5" fill="#2596d8"/><rect x="5" y="11.8" width="10" height="3.2" rx="1.6" fill="#2596d8"/><rect x="0" y="12.3" width="3.3" height="2.2" fill="#fff"/></svg>
<svg class="ab" style="left:774px;top:1px" width="17" height="17"><rect x="0.5" y="0.5" width="15" height="15" fill="none" stroke="#c4c4c4"/><path d="M6.5,0.5 V15.5" stroke="#c4c4c4"/></svg>
<svg class="ab" style="left:804px;top:1px" width="17" height="17"><rect x="0.5" y="0.5" width="15" height="15" fill="none" stroke="#c4c4c4"/><path d="M0.5,11.5 H15.5" stroke="#c4c4c4"/></svg>
<div class="ab" style="left:829px;top:0;width:25px;height:23px;background:#ececec;border-radius:3px"></div>
<svg class="ab" style="left:833px;top:0px" width="18" height="18"><path d="M0.5,4 V0.5 H4 M14,0.5 H17.5 V4 M17.5,14 V17.5 H14 M4,17.5 H0.5 V14" fill="none" stroke="#555" stroke-width="1"/><rect x="4.5" y="4.5" width="9" height="9" fill="none" stroke="#555"/></svg>
<svg class="ab" style="left:864px;top:1px" width="18" height="18"><path d="M0.5,4 V0.5 H4 M14,0.5 H17.5 V4 M17.5,14 V17.5 H14 M4,17.5 H0.5 V14" fill="none" stroke="#c8c8c8"/><rect x="4.5" y="4.5" width="9" height="9" fill="none" stroke="#c8c8c8"/><path d="M0,0 L17,17" stroke="#c8c8c8"/></svg>
<div class="ab" style="left:902px;top:0;width:25px;height:23px;background:#ececec;border-radius:3px"></div>
<svg class="ab" style="left:906px;top:0px" width="18" height="18"><rect x="0.8" y="0.8" width="16.4" height="16.4" fill="none" stroke="#222" stroke-width="1.6"/><path d="M4.5,6 L7.5,8.5 L4.5,11 M9,12 H13" fill="none" stroke="#222" stroke-width="1.3"/></svg>
<svg class="ab" style="left:949px;top:0px" width="18" height="18"><rect x="0.8" y="0.8" width="16.4" height="16.4" fill="none" stroke="#222" stroke-width="1.5"/><path d="M4.5,13.5 L13.5,4.5 M4.5,10 V13.5 H8 M10,4.5 H13.5 V8" fill="none" stroke="#333" stroke-width="1"/></svg>
<svg class="ab" style="left:996px;top:2px" width="17" height="16"><path d="M1.5,10 V1.5 H10" fill="none" stroke="#777"/><path d="M4.5,13 V4.5 H12 V7" fill="none" stroke="#777"/><polygon points="9,7 16,11 9,15" fill="#3a9a2a"/></svg>
<div class="c" style="left:1016px;top:3px;height:16px;line-height:16px;font-size:11px;font-weight:bold;color:#111;letter-spacing:0.4px">VM_cWINCC75</div>
<svg class="ab" style="left:1106px;top:6px" width="10" height="10"><path d="M0.5,0.5 L9.5,9.5 M9.5,0.5 L0.5,9.5" stroke="#b0b0b0" stroke-width="1.4"/></svg>
<svg class="ab" style="left:1681px;top:0px" width="20" height="19"><rect x="1.5" y="12.5" width="17" height="5" fill="none" stroke="#888"/></svg>
<svg class="ab" style="left:1711px;top:0px" width="20" height="19"><path d="M3.5,2 V0.5 H18.5 V15.5 H17" fill="none" stroke="#888"/><rect x="1.5" y="2.5" width="15" height="15" fill="#fff" stroke="#888"/><rect x="6.5" y="7.5" width="5" height="5" fill="none" stroke="#888"/></svg>
<svg class="ab" style="left:1741px;top:0px" width="20" height="19"><path d="M1,0 V3.5 L6.6,8.9 L1,14.5 V17.3 H4.8 L10,12.4 L15,17.3 H18.8 V14.5 L13.2,8.9 L18.8,3.5 V0 H14.8 L10,5 L5,0 Z" fill="#fff" stroke="#888" stroke-width="1.1"/></svg>
</body></html>
